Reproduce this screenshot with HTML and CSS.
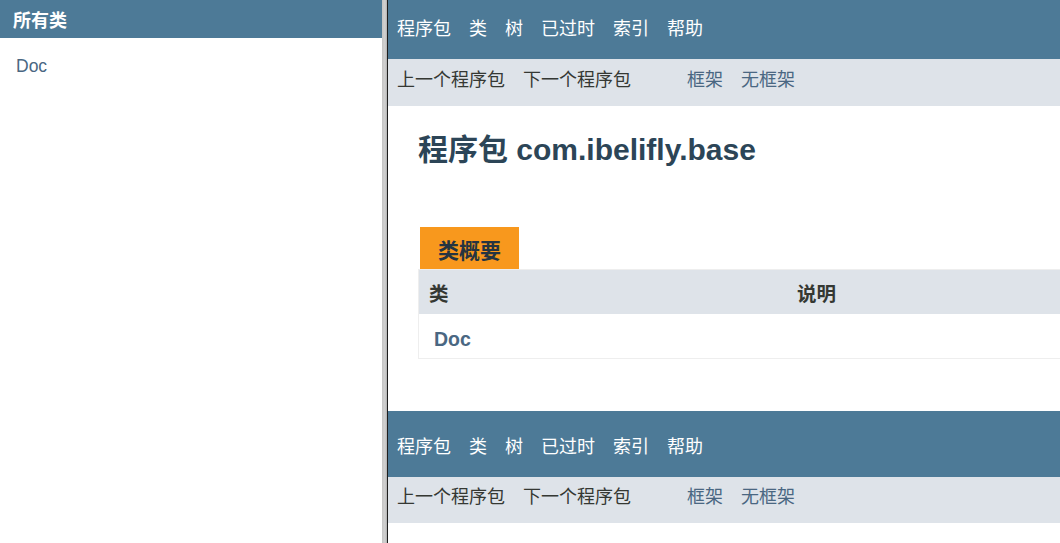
FILE: index.html
```html
<!DOCTYPE html>
<html lang="zh-CN">
<head>
  <meta charset="UTF-8" />
  <title>com.ibelifly.base</title>
  <link rel="stylesheet" href="styles.css">
</head>
<body>

<div class="frames">
  <aside class="side">
    <h1 class="bar">所有类</h1>
    <ul class="index-list">
      <li><a href="#">Doc</a></li>
    </ul>
  </aside>

  <div class="splitter"></div>

  <main class="content">
    <div class="top-nav">
      <ul class="nav-list">
        <li>程序包</li>
        <li>类</li>
        <li>树</li>
        <li>已过时</li>
        <li>索引</li>
        <li>帮助</li>
      </ul>
    </div>
    <div class="sub-nav">
      <ul class="nav-list">
        <li>上一个程序包</li>
        <li>下一个程序包</li>
      </ul>
      <ul class="nav-list frame-links">
        <li><a href="#">框架</a></li>
        <li><a href="#">无框架</a></li>
      </ul>
    </div>

    <div class="header">
      <h1 class="title">程序包 com.ibelifly.base</h1>
    </div>

    <div class="summary">
      <div class="caption">类概要</div>
      <table class="summary-table">
        <tr>
          <th class="col-first">类</th>
          <th class="col-last">说明</th>
        </tr>
        <tr>
          <td class="col-first"><a href="#">Doc</a></td>
          <td class="col-last"></td>
        </tr>
      </table>
    </div>

    <div class="top-nav bottom">
      <ul class="nav-list">
        <li>程序包</li>
        <li>类</li>
        <li>树</li>
        <li>已过时</li>
        <li>索引</li>
        <li>帮助</li>
      </ul>
    </div>
    <div class="sub-nav bottom">
      <ul class="nav-list">
        <li>上一个程序包</li>
        <li>下一个程序包</li>
      </ul>
      <ul class="nav-list frame-links">
        <li><a href="#">框架</a></li>
        <li><a href="#">无框架</a></li>
      </ul>
    </div>
  </main>
</div>

</body>
</html>
```

FILE: styles.css
```css
html, body {
  margin: 0;
  padding: 0;
  height: 100%;
  background: #ffffff;
  font-family: 'Liberation Sans', Arial, 'Noto Sans CJK SC', sans-serif;
  color: #353833;
}

a {
  color: #4a6782;
  text-decoration: none;
}

ul {
  list-style: none;
  margin: 0;
  padding: 0;
}

.frames {
  display: flex;
  height: 100vh;
  overflow: hidden;
}

/* left frame */
.side {
  width: 382px;
  flex-shrink: 0;
}

.bar {
  margin: 0;
  height: 38px;
  box-sizing: border-box;
  padding: 8px 13px 0;
  background: #4d7a97;
  color: #ffffff;
  font-size: 18px;
  line-height: 26px;
  font-weight: bold;
}

.index-list {
  padding: 15px 16px;
  font-size: 17.5px;
  line-height: 26px;
}

.splitter {
  width: 5px;
  flex-shrink: 0;
  background: linear-gradient(to right, #c4c4c4, #d2d2d2 60%, #b0b0b0);
  border-right: 1px solid #1e1e1e;
}

/* right frame */
.content {
  flex: 1;
  min-width: 0;
  overflow: hidden;
}

.nav-list {
  display: flex;
}

.nav-list li {
  padding: 0 9px;
  white-space: nowrap;
}

.top-nav {
  height: 59px;
  box-sizing: border-box;
  padding-top: 16px;
  background: #4d7a97;
  color: #ffffff;
  font-size: 18px;
  line-height: 27px;
}

.top-nav.bottom {
  height: 66px;
  padding-top: 23px;
  margin-top: 52px;
}

.sub-nav {
  display: flex;
  height: 47px;
  box-sizing: border-box;
  padding-top: 8px;
  background: #dee3e9;
  font-size: 18px;
  line-height: 26px;
}

.sub-nav.bottom {
  height: 46px;
  padding-top: 7px;
}

.frame-links {
  margin-left: 38px;
}

.header {
  padding: 27px 30px 0;
}

.title {
  margin: 0;
  color: #2c4557;
  font-size: 30px;
  line-height: 34px;
  font-weight: bold;
}

.summary {
  margin: 60px 0 0 30px;
  width: 760px;
}

.caption {
  width: max-content;
  margin-left: 2px;
  height: 42px;
  box-sizing: border-box;
  padding: 12px 18px 0;
  background: #f8981d;
  color: #253441;
  font-size: 21px;
  line-height: 24px;
  font-weight: bold;
}

.summary-table {
  width: 100%;
  border-collapse: collapse;
  border: 1px solid #eeeeee;
  font-size: 19.5px;
}

.summary-table th {
  height: 44px;
  padding: 0 10px;
  background: #dee3e9;
  text-align: left;
  font-weight: bold;
  color: #353833;
}

.summary-table th.col-first {
  width: 348px;
}

.summary-table td {
  height: 38px;
  padding: 6px 15px 0;
  background: #ffffff;
}

.summary-table td a {
  font-weight: bold;
}
```
